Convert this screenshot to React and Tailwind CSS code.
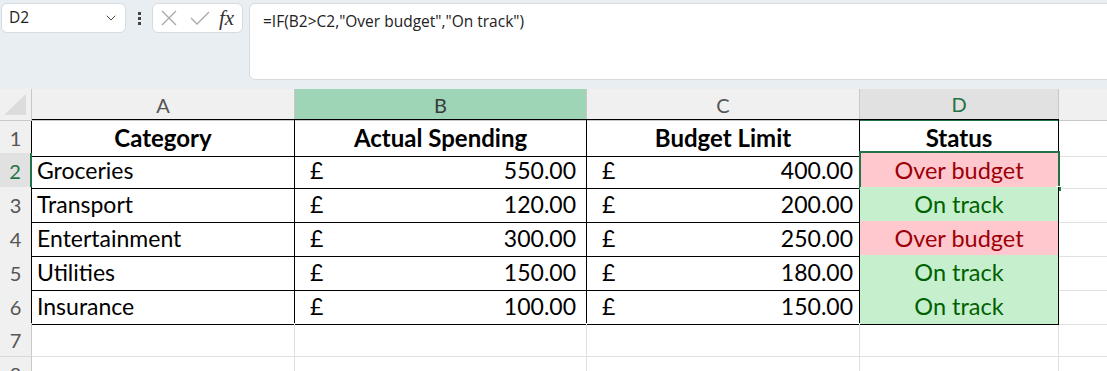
import React from "react";
import { ChevronDown } from "lucide-react";

const rows = [
  { cat: "Groceries", spent: "550.00", limit: "400.00", over: true },
  { cat: "Transport", spent: "120.00", limit: "200.00", over: false },
  { cat: "Entertainment", spent: "300.00", limit: "250.00", over: true },
  { cat: "Utilities", spent: "150.00", limit: "180.00", over: false },
  { cat: "Insurance", spent: "100.00", limit: "150.00", over: false },
];

const font = { fontFamily: "Lato, 'Open Sans', sans-serif" };

function Toolbar() {
  return (
    <div className="flex items-start h-[89px] pt-[3px] bg-[#e8eef2] overflow-hidden" style={{ fontFamily: "'Open Sans', 'Noto Sans', sans-serif" }}>
      <div className="shrink-0 ml-[1px] w-[125px] h-[30px] bg-white border border-[#d6dbe0] rounded-md flex items-center justify-between pl-[7px] pr-[6px]">
        <span className="text-[15.5px] text-[#222]">D2</span>
        <ChevronDown className="w-4 h-4 text-[#444]" strokeWidth={1.5} />
      </div>
      <div className="shrink-0 w-[26px] h-[30px] flex flex-col items-center justify-center gap-[2px]">
        <span className="w-[3px] h-[3px] bg-[#444]" />
        <span className="w-[3px] h-[3px] bg-[#444]" />
        <span className="w-[3px] h-[3px] bg-[#444]" />
      </div>
      <div className="shrink-0 w-[91px] h-[30px] bg-white border border-[#d6dbe0] rounded-md flex items-center pl-[7px] pr-[4px]">
        <svg width="18" height="18" viewBox="0 0 18 18" className="mr-[12px]">
          <path d="M2 2 L16 16 M16 2 L2 16" stroke="#a8a8a8" strokeWidth="1.3" fill="none" />
        </svg>
        <svg width="20" height="18" viewBox="0 0 20 18" className="mr-[9px]">
          <path d="M1 9 L7 15 L19 3" stroke="#a8a8a8" strokeWidth="1.3" fill="none" />
        </svg>
        <span className="text-[21px] italic text-[#333] leading-none" style={{ fontFamily: "'Liberation Serif', 'DejaVu Serif', serif" }}>fx</span>
      </div>
      <div className="shrink-0 ml-[6px] w-[880px] h-[77px] bg-white border border-[#d6dbe0] rounded-md pl-[13px] pt-[5px]">
        <span className="text-[15.5px] text-[#222]">=IF(B2&gt;C2,"Over budget","On track")</span>
      </div>
    </div>
  );
}

function ColHeaders() {
  return (
    <div className="grid grid-cols-[32px_263px_292px_273px_199px_1fr] h-[30px] text-[20px] text-[#555]" style={font}>
      <div className="relative bg-[#f0f0f0] border-b border-r border-[#c8c8c8]">
        <svg width="26" height="24" viewBox="0 0 26 24" className="absolute right-[3px] bottom-[3px]">
          <polygon points="24,1 24,22 2,22" fill="#dcdcdc" />
        </svg>
      </div>
      <div className="bg-[#f0f0f0] border-b border-r border-[#c8c8c8] flex items-center justify-center">A</div>
      <div className="bg-[#9fd5b7] border-b border-r border-[#c8c8c8] flex items-center justify-center text-[#3a3a3a]">B</div>
      <div className="bg-[#f0f0f0] border-b border-r border-[#c8c8c8] flex items-center justify-center">C</div>
      <div className="bg-[#e1e1e1] border-b-2 border-b-[#217346] border-r border-r-[#c8c8c8] flex items-center justify-center text-[#217346]">D</div>
      <div className="bg-[#f0f0f0] border-b border-[#c8c8c8]" />
    </div>
  );
}

function RowHead({ n, table, selected }) {
  const edge = selected ? "border-r-2 border-r-[#217346]" : table ? "border-r border-r-black" : "border-r border-r-[#c8c8c8]";
  return (
    <div className={`${selected ? "bg-[#e1e1e1] text-[#217346]" : "bg-[#f0f0f0] text-[#555]"} ${edge} border-b border-b-[#d8d8d8] flex items-center justify-center text-[20px]`}>
      {n}
    </div>
  );
}

function Money({ value, padR }) {
  return (
    <div className={`border-r border-b border-black flex items-center justify-between pl-[15px] ${padR} text-[23px] text-black`}>
      <span>£</span>
      <span>{value}</span>
    </div>
  );
}

export default function App() {
  return (
    <div className="w-[1107px] h-[371px] bg-white overflow-hidden">
      <Toolbar />
      <ColHeaders />
      <div style={font}>
        <div className="grid grid-cols-[32px_263px_292px_273px_199px_1fr] h-[34px]">
          <RowHead n="1" table />
          <div className="border-t border-r border-b border-black flex items-center justify-center font-bold text-[24px]">Category</div>
          <div className="border-t border-r border-b border-black flex items-center justify-center font-bold text-[24px]">Actual Spending</div>
          <div className="border-t border-r border-b border-black flex items-center justify-center font-bold text-[24px]">Budget Limit</div>
          <div className="border-t border-r border-b border-black flex items-center justify-center font-bold text-[24px]">Status</div>
          <div className="border-b border-[#e1e1e1]" />
        </div>
        {rows.map((r, i) => (
          <div key={r.cat} className="grid grid-cols-[32px_263px_292px_273px_199px_1fr] h-[34px]">
            <RowHead n={i + 2} table selected={i === 0} />
            <div className="border-r border-b border-black flex items-center pl-[5px] text-[23px] text-black">{r.cat}</div>
            <Money value={r.spent} padR="pr-[10px]" />
            <Money value={r.limit} padR="pr-[6px]" />
            <div className="relative border-r border-b border-black">
              <div className={`h-full flex items-center justify-center text-[23.5px] ${r.over ? "bg-[#ffc7ce] text-[#9c0006]" : "bg-[#c6efce] text-[#006100]"}`}>
                {r.over ? "Over budget" : "On track"}
              </div>
              {i === 0 && (
                <div className="absolute -left-[1px] -top-[2px] -right-[2px] -bottom-[2px] border-2 border-[#217346]">
                  <div className="absolute -right-[4px] -bottom-[4px] w-[6px] h-[6px] bg-[#217346] border border-white" />
                </div>
              )}
            </div>
            <div className="border-b border-[#e1e1e1]" />
          </div>
        ))}
        {[7, 8].map((n) => (
          <div key={n} className="grid grid-cols-[32px_263px_292px_273px_199px_1fr] h-[34px]">
            <RowHead n={n} />
            <div className="border-r border-b border-[#e1e1e1]" />
            <div className="border-r border-b border-[#e1e1e1]" />
            <div className="border-r border-b border-[#e1e1e1]" />
            <div className="border-r border-b border-[#e1e1e1]" />
            <div className="border-b border-[#e1e1e1]" />
          </div>
        ))}
      </div>
    </div>
  );
}
